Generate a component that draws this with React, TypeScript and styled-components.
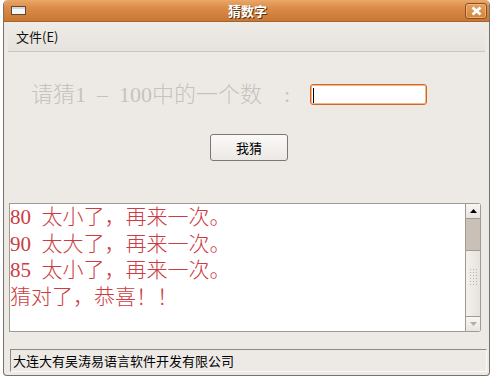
import React from "react";
import styled, { createGlobalStyle } from "styled-components";

const GlobalStyle = createGlobalStyle`
  * { box-sizing: border-box; }
  body {
    margin: 0;
    background: #ffffff;
    font-family: "Noto Sans CJK SC", "DejaVu Sans", sans-serif;
  }
`;

const Window = styled.div`
  width: 487px;
  height: 376px;
  margin-left: 3px;
  display: flex;
  flex-direction: column;
  background: #edeae6;
  border-radius: 5px 5px 4px 4px;
  border: 1px solid #77726c;
  border-top: none;
  overflow: hidden;
`;

const TitleBar = styled.div`
  height: 22px;
  margin: 0 -1px;
  display: flex;
  align-items: center;
  padding: 0 3px 0 8px;
  border-radius: 5px 5px 0 0;
  background: linear-gradient(#eaa869 0%, #dc8d4a 35%, #d1813c 70%, #c97734 100%);
  border-bottom: 1px solid #a4632c;
`;

const WinIcon = styled.div`
  width: 15px;
  height: 9px;
  border: 1px solid #5a4a3c;
  background: linear-gradient(#d8d8d8 0 2px, #f6f6f6 2px);
`;

const Title = styled.div`
  flex: 1;
  text-align: center;
  color: #ffffff;
  font-weight: bold;
  font-size: 13px;
  text-shadow: 1px 1px 0 #5c3412;
  padding-left: 4px;
`;

const CloseButton = styled.div`
  width: 22px;
  height: 16px;
  border: 1px solid #8e4d1d;
  border-radius: 3px;
  background: linear-gradient(#e3a262, #d2853f);
  box-shadow: inset 0 0 0 1px rgba(255, 215, 170, 0.45);
  display: flex;
  align-items: center;
  justify-content: center;
`;

const MenuBar = styled.div`
  height: 30px;
  margin: 0 4px;
  padding-left: 8px;
  display: flex;
  align-items: center;
  font-size: 13px;
  color: #111;
  background: linear-gradient(#efebe7, #e6e2dd);
  border-bottom: 1px solid #cbc6c0;
`;

const Content = styled.div`
  flex: 1;
  display: flex;
  flex-direction: column;
  padding: 32px 2px 0 5px;
`;

const AskRow = styled.div`
  display: flex;
  align-items: center;
  height: 21px;
  padding-left: 22px;
`;

const AskLabel = styled.div`
  width: 279px;
  font-family: "Liberation Serif", "Noto Sans CJK SC", serif;
  font-size: 22px;
  font-weight: 300;
  color: #c6c2be;
  white-space: pre;
  line-height: 21px;
`;

const Entry = styled.div`
  width: 117px;
  height: 21px;
  border: 1px solid #d06a22;
  border-radius: 3px;
  background: #fff;
  box-shadow: inset 0 0 0 1px #f1b68a;
  padding: 3px 2px;
`;

const Caret = styled.div`
  width: 1px;
  height: 15px;
  background: #000;
`;

const GuessButton = styled.button`
  align-self: flex-start;
  margin: 29px 0 0 201px;
  width: 78px;
  height: 27px;
  border: 1px solid #7f776f;
  border-radius: 3px;
  background: linear-gradient(#fbfaf9, #ece8e4);
  font-family: "Noto Sans CJK SC", sans-serif;
  font-size: 13px;
  color: #000;
  padding: 0;
`;

const LogArea = styled.div`
  margin-top: 42px;
  height: 129px;
  width: 472px;
  display: flex;
`;

const LogText = styled.div`
  flex: 1;
  background: #fff;
  border: 1px solid #a29a92;
  overflow: hidden;
`;

const LogLine = styled.div`
  font-family: "Liberation Serif", "Noto Sans CJK SC", serif;
  font-size: 21px;
  font-weight: 300;
  line-height: 26.5px;
  color: #cc3c42;
  white-space: pre;
`;

const ScrollBar = styled.div`
  width: 15px;
  display: flex;
  flex-direction: column;
  border: 1px solid #a29a92;
  border-left: none;
  border-radius: 0 3px 3px 0;
  background: #efebe7;
`;

const ArrowButton = styled.div<{ $disabled?: boolean }>`
  height: 15px;
  display: flex;
  align-items: center;
  justify-content: center;
  background: linear-gradient(#f8f6f4, #e8e4e0);
  border-bottom: ${(p) => (p.$disabled ? "none" : "1px solid #a29a92")};
  border-top: ${(p) => (p.$disabled ? "1px solid #a29a92" : "none")};
  color: ${(p) => (p.$disabled ? "#b4ada6" : "#000")};
`;

const Trough = styled.div`
  height: 31px;
  background: #c9c1b8;
`;

const Thumb = styled.div`
  flex: 1;
  background: linear-gradient(90deg, #f3f1ee, #e6e2de);
  border-top: 1px solid #a29a92;
  display: flex;
  align-items: center;
  justify-content: center;
  padding-bottom: 14px;
`;

const Grip = styled.div`
  width: 8px;
  height: 17px;
  background-image: radial-gradient(#b9b2aa 0.8px, transparent 1px);
  background-size: 3px 3px;
`;

const StatusBar = styled.div`
  margin: 17px 0 0 1px;
  height: 23px;
  width: 477px;
  border: 1px solid #8f8983;
  border-right-color: #fbfaf9;
  border-bottom-color: #fbfaf9;
  display: flex;
  align-items: center;
  padding-left: 2px;
  font-size: 13px;
  color: #000;
`;

const guesses = [
  "80  太小了，再来一次。",
  "90  太大了，再来一次。",
  "85  太小了，再来一次。",
  "猜对了，恭喜！！",
];

export default function App() {
  return (
    <>
      <GlobalStyle />
      <Window>
        <TitleBar>
          <WinIcon />
          <Title>猜数字</Title>
          <CloseButton>
            <svg width="11" height="10" viewBox="0 0 11 10">
              <path d="M1.5 1.5 L9.5 8.5 M9.5 1.5 L1.5 8.5" stroke="#fff" strokeWidth="2.8" />
            </svg>
          </CloseButton>
        </TitleBar>
        <MenuBar>文件(E)</MenuBar>
        <Content>
          <AskRow>
            <AskLabel>{"请猜1  –  100中的一个数    :"}</AskLabel>
            <Entry>
              <Caret />
            </Entry>
          </AskRow>
          <GuessButton>我猜</GuessButton>
          <LogArea>
            <LogText>
              {guesses.map((g) => (
                <LogLine key={g}>{g}</LogLine>
              ))}
            </LogText>
            <ScrollBar>
              <ArrowButton>
                <svg width="7" height="4" viewBox="0 0 7 4">
                  <path d="M0 4 L3.5 0 L7 4 Z" fill="currentColor" />
                </svg>
              </ArrowButton>
              <Trough />
              <Thumb>
                <Grip />
              </Thumb>
              <ArrowButton $disabled>
                <svg width="7" height="4" viewBox="0 0 7 4">
                  <path d="M0 0 L7 0 L3.5 4 Z" fill="currentColor" />
                </svg>
              </ArrowButton>
            </ScrollBar>
          </LogArea>
          <StatusBar>大连大有吴涛易语言软件开发有限公司</StatusBar>
        </Content>
      </Window>
    </>
  );
}
